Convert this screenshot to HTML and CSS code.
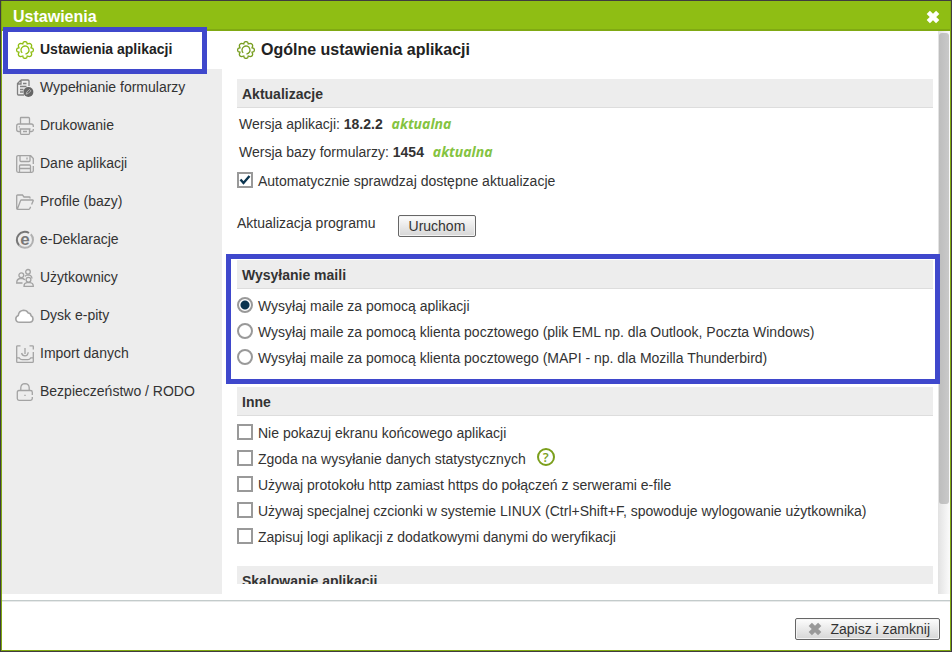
FILE: index.html
```html
<!DOCTYPE html>
<html lang="pl">
<head>
    <meta charset="UTF-8">
    <title>Ustawienia</title>
    <meta name="viewport" content="width=device-width, initial-scale=1.0">
    <link rel="stylesheet" href="styles.css">
</head>
<body>
    <svg class="defs" width="0" height="0">
        <symbol id="gear" viewBox="0 0 18 18">
            <path d="M7.3 1.2 Q9 0 10.7 1.2 L11.2 3 L13.2 2.3 Q15.5 2.5 15.7 4.8 L15 6.8 L16.8 7.3 Q18 9 16.8 10.7 L15 11.2 L15.7 13.2 Q15.5 15.5 13.2 15.7 L11.2 15 L10.7 16.8 Q9 18 7.3 16.8 L6.8 15 L4.8 15.7 Q2.5 15.5 2.3 13.2 L3 11.2 L1.2 10.7 Q0 9 1.2 7.3 L3 6.8 L2.3 4.8 Q2.5 2.5 4.8 2.3 L6.8 3 Z"/>
            <path d="M6.2 11.9 A4 4 0 1 1 9.5 13"/>
        </symbol>
        <symbol id="cross" viewBox="0 0 14 14">
            <path d="M2.3 2.3 L11.7 11.7 M11.7 2.3 L2.3 11.7" fill="none" stroke="currentColor" stroke-width="4.6"/>
        </symbol>
    </svg>

    <div class="window">
        <header class="titlebar">
            <h1>Ustawienia</h1>
            <button class="close" aria-label="Zamknij"><svg width="14" height="14"><use href="#cross"/></svg></button>
        </header>

        <div class="main">
            <nav class="menu">
                <a class="item active" href="#">
                    <svg class="icon" viewBox="0 0 18 18"><use href="#gear"/></svg>
                    Ustawienia aplikacji
                </a>
                <a class="item" href="#">
                    <svg class="icon" viewBox="0 0 18 18">
                        <path class="dark-line" d="M5 1 H12 Q13 1 13 2 V7 M5 1 L1.5 4.5 V15 Q1.5 16 2.5 16 H8 M1.5 5 H5 V1 M7 4.5 H10.5 M4 7.5 H10.5 M4 10.5 H7.5 M4 13 H7"/>
                        <circle class="dark-fill" cx="12.4" cy="13" r="5"/>
                        <path d="M10.2 15.2 L10.9 13 L13.4 10.5 L14.8 11.9 L12.3 14.4 Z" fill="none" stroke="#bbb" stroke-width=".9"/>
                    </svg>
                    Wypełnianie formularzy
                </a>
                <a class="item" href="#">
                    <svg class="icon" viewBox="0 0 18 18">
                        <path d="M4.5 7 V1 Q4.5 .5 5 .5 H12.5 Q13.5 .5 13.5 1.5 V7 M4 14.5 H2.5 Q.7 14.5 .7 12.7 V9 Q.7 7 2.7 7 H15.3 Q17.3 7 17.3 9 V10 M17.3 12 V13 Q17.3 14.5 15.5 14.5 H14 M2.8 9.8 H4 M4.5 12 V16.5 Q4.5 17.3 5.3 17.3 H12.7 Q13.5 17.3 13.5 16.5 V12 M3.5 12 H14.5 M7 14.5 H11"/>
                    </svg>
                    Drukowanie
                </a>
                <a class="item" href="#">
                    <svg class="icon" viewBox="0 0 18 18">
                        <path d="M17.3 9 V3.5 L14.7 .7 H2.2 Q.7 .7 .7 2.2 V15.8 Q.7 17.3 2.2 17.3 H15.8 Q17.3 17.3 17.3 15.8 V11 M4 1 V5.5 Q4 6.5 5 6.5 H13 Q14 6.5 14 5.5 V1 M11 2.5 V4.5 M3.5 17 V11 Q3.5 10 4.5 10 H13.5 Q14.5 10 14.5 11 V17 M4 13.5 H14"/>
                    </svg>
                    Dane aplikacji
                </a>
                <a class="item" href="#">
                    <svg class="icon" viewBox="0 0 18 18">
                        <path d="M14 5.5 V4.8 Q14 4 13.2 4 H8 L6.5 2 H1.5 Q.7 2 .7 2.8 V15.5 Q.7 16.3 1.5 16.3 H12.8 Q13.6 16.3 14 15.3 L14.6 13.8 M15.6 11.6 L17.2 7.8 Q17.4 7 16.6 7 H5.5 Q4.8 7 4.5 7.7 L1.4 16"/>
                    </svg>
                    Profile (bazy)
                </a>
                <a class="item" href="#">
                    <svg class="icon" viewBox="0 0 18 18">
                        <path class="ring-light" d="M14.8 3.2 A8 8 0 0 1 3 14.3"/>
                        <path class="ring" d="M13 2 A8 8 0 0 0 3 14.3"/>
                        <text class="letter" x="9" y="13.5">e</text>
                    </svg>
                    e-Deklaracje
                </a>
                <a class="item" href="#">
                    <svg class="icon" viewBox="0 0 18 18">
                        <circle cx="12" cy="2.8" r="2.3"/>
                        <circle cx="5.3" cy="6.3" r="2.4"/>
                        <circle cx="12.5" cy="10.8" r="2.4"/>
                        <path d="M9 7.3 Q10 5.8 12 5.8 Q15.8 6 16 9.5 M6.5 14 H.7 Q.7 10 4 9.5 H6.5 Q8 9.7 8.8 11 M8 17.3 Q8 14 11 13.7 H14 Q17.3 14 17.3 17.3 Z"/>
                    </svg>
                    Użytkownicy
                </a>
                <a class="item" href="#">
                    <svg class="icon" viewBox="0 0 18 18">
                        <path class="cloud" d="M3.7 15.3 Q.1 15.2 -.2 12 Q-.2 9.5 2.3 8.5 Q2.7 3.8 7.3 3.2 Q10.9 3.2 12.2 6 Q14.7 6 15.1 8.8 Q17.1 9.7 17 12 Q16.7 15.2 13.7 15.3 Z"/>
                    </svg>
                    Dysk e-pity
                </a>
                <a class="item" href="#">
                    <svg class="icon" viewBox="0 0 18 18">
                        <path d="M4.5 .8 H1.5 Q.7 .8 .7 1.6 V16.4 Q.7 17.3 1.5 17.3 H16.5 Q17.3 17.3 17.3 16.4 V7 M17.3 4.5 V1.6 Q17.3 .8 16.5 .8 H13.5 M.7 12.9 H3.2 Q4.4 14.7 6 14.7 H12 Q13.6 14.7 14.8 12.9 H17.3 M9 3 V9 M5.6 8 Q6.2 10.8 9 10.8 Q11.8 10.8 12.2 7.2"/>
                    </svg>
                    Import danych
                </a>
                <a class="item" href="#">
                    <svg class="icon" viewBox="0 0 18 18">
                        <path d="M4.8 7.5 V4.8 Q5 .8 9 .7 Q13 .8 13.2 4.8 V7.5 M16.3 12 V9.3 Q16.3 7.5 14.5 7.5 H3 Q1.3 7.5 1.3 9.3 V15.5 Q1.3 17.3 3 17.3 H14.5 Q16.3 17.3 16.3 15.5 V14 M9 11.7 V13"/>
                    </svg>
                    Bezpieczeństwo / RODO
                </a>
                <span class="mark menu-mark"></span>
            </nav>

            <main class="content">
                <div class="scrollbar"><div class="thumb"></div></div>
                <div class="panel">
                    <h2>
                        <svg class="icon" viewBox="0 0 18 18"><use href="#gear"/></svg>
                        Ogólne ustawienia aplikacji
                    </h2>

                    <section>
                        <h3>Aktualizacje</h3>
                        <p class="version">Wersja aplikacji: <strong>18.2.2</strong> <em>aktualna</em></p>
                        <p class="version">Wersja bazy formularzy: <strong>1454</strong> <em>aktualna</em></p>
                        <label class="option"><input type="checkbox" checked> Automatycznie sprawdzaj dostępne aktualizacje</label>
                        <div class="program">
                            <span>Aktualizacja programu</span>
                            <button class="btn">Uruchom</button>
                        </div>
                    </section>

                    <section>
                        <h3>Wysyłanie maili</h3>
                        <label class="option"><input type="radio" name="mail" checked> Wysyłaj maile za pomocą aplikacji</label>
                        <label class="option"><input type="radio" name="mail"> Wysyłaj maile za pomocą klienta pocztowego (plik EML np. dla Outlook, Poczta Windows)</label>
                        <label class="option"><input type="radio" name="mail"> Wysyłaj maile za pomocą klienta pocztowego (MAPI - np. dla Mozilla Thunderbird)</label>
                        <span class="mark section-mark"></span>
                    </section>

                    <section>
                        <h3>Inne</h3>
                        <label class="option"><input type="checkbox"> Nie pokazuj ekranu końcowego aplikacji</label>
                        <div class="with-help">
                            <label class="option"><input type="checkbox"> Zgoda na wysyłanie danych statystycznych</label>
                            <button class="help">?</button>
                        </div>
                        <label class="option"><input type="checkbox"> Używaj protokołu http zamiast https do połączeń z serwerami e-file</label>
                        <label class="option"><input type="checkbox"> Używaj specjalnej czcionki w systemie LINUX (Ctrl+Shift+F, spowoduje wylogowanie użytkownika)</label>
                        <label class="option"><input type="checkbox"> Zapisuj logi aplikacji z dodatkowymi danymi do weryfikacji</label>
                    </section>

                    <section>
                        <h3>Skalowanie aplikacji</h3>
                    </section>
                </div>
            </main>
        </div>

        <footer class="footer">
            <button class="btn save"><svg width="14" height="14"><use href="#cross"/></svg>Zapisz i zamknij</button>
        </footer>
    </div>
</body>
</html>
```
FILE: styles.css
```css
* {
    box-sizing: border-box;
}

body {
    margin: 0;
    padding: 1px;
    height: 100vh;
    background: #403c40;
    font-family: "Liberation Sans", Arial, sans-serif;
    font-size: 14px;
    color: #333;
}

h1, h2, h3, p {
    margin: 0;
}

.defs {
    position: absolute;
}

.window {
    display: flex;
    flex-direction: column;
    height: 100%;
    background: #fff;
    border: 1px solid #7fa810;
    border-top: none;
}

/* title bar */
.titlebar {
    display: flex;
    justify-content: space-between;
    align-items: center;
    height: 30px;
    padding: 3px 10px 0 11px;
    background: #8fbe14;
    border-bottom: 2px solid #80a913;
}

.titlebar h1 {
    font-size: 16px;
    color: #fff;
}

.close {
    display: flex;
    padding: 0;
    border: none;
    background: none;
    color: #fff;
    cursor: pointer;
}

/* left menu */
.main {
    display: flex;
    flex: 1;
    min-height: 0;
    padding-bottom: 6px;
}

.menu {
    position: relative;
    width: 220px;
    background: #ededed;
}

.item {
    display: flex;
    align-items: center;
    gap: 6px;
    height: 38px;
    padding: 0 0 2px 14px;
    color: #333;
    text-decoration: none;
}

.item.active {
    background: #fff;
    color: #222;
    font-weight: bold;
}

.icon {
    flex: none;
    width: 18px;
    height: 18px;
    fill: none;
    stroke: #a3a3a3;
    stroke-width: 1.3;
    overflow: visible;
}

.item .icon {
    margin-top: 2px;
}

.active .icon {
    stroke: #8fbe14;
}

.dark-line {
    stroke: #808080;
}

.dark-fill {
    fill: #666;
    stroke: none;
}

.ring {
    stroke: #777;
    stroke-width: 2;
}

.ring-light {
    stroke: #b0b0b0;
    stroke-width: 2;
}

.letter {
    font-size: 17px;
    font-weight: bold;
    text-anchor: middle;
    fill: #777;
    stroke: none;
}

.cloud {
    fill: #fff;
    stroke-width: 1.6;
}

/* highlighted areas */
.mark {
    position: absolute;
    border: 5px solid #3f48cc;
    pointer-events: none;
}

.menu-mark {
    top: -4px;
    left: 1px;
    right: 15px;
    height: 47px;
}

.section-mark {
    top: -6px;
    left: -11px;
    right: -7px;
    bottom: -14px;
}

/* content */
.content {
    position: relative;
    flex: 1;
    min-width: 0;
    padding-bottom: 10px;
}

.panel {
    height: 100%;
    padding: 0 17px 0 15px;
    overflow: hidden;
}

h2 {
    display: flex;
    align-items: center;
    gap: 6px;
    height: 38px;
    margin-bottom: 10px;
    font-size: 16px;
    color: #222;
}

h2 .icon {
    stroke: #789e20;
}

section {
    position: relative;
    margin-bottom: 17px;
}

h3 {
    height: 29px;
    margin-bottom: 3px;
    padding-left: 5px;
    background: #ededed;
    border-bottom: 1px solid #ddd;
    font-size: 14px;
    line-height: 31px;
}

.version {
    height: 28px;
    padding-left: 2px;
    line-height: 26px;
}

.version em {
    margin-left: 5px;
    font-family: "Open Sans", sans-serif;
    font-weight: bold;
    line-height: 1;
    color: #84c341;
}

.option {
    display: flex;
    align-items: center;
    gap: 5px;
    height: 26px;
    padding-top: 2px;
}

.option input {
    appearance: none;
    flex: none;
    width: 16px;
    height: 16px;
    margin: 0 0 2px;
    background: #fff;
    border: 2px solid #999;
}

.option input[type="radio"] {
    border-radius: 50%;
}

.option input[type="radio"]:checked {
    background: radial-gradient(circle, #0b3550 4px, #fff 5px);
}

.option input[type="checkbox"]:checked {
    background: #fff url("data:image/svg+xml,%3Csvg xmlns='http://www.w3.org/2000/svg' viewBox='0 0 12 12'%3E%3Cpath d='M1.5 5.5 L4.5 9 L10.5 2' fill='none' stroke='%230b3550' stroke-width='2.4'/%3E%3C/svg%3E");
}

.program {
    display: flex;
    align-items: flex-start;
    gap: 22px;
    padding: 22px 0 6px;
}

.btn {
    height: 22px;
    padding: 0 10px;
    border: 1px solid #666;
    border-radius: 2px;
    background: linear-gradient(#fdfdfd, #d6d6d6);
    box-shadow: inset 0 0 0 1px #f4f4f4;
    font-family: inherit;
    font-size: 14px;
    color: #333;
    cursor: pointer;
}

.with-help {
    display: flex;
    align-items: center;
    gap: 11px;
}

.help {
    width: 18px;
    height: 18px;
    margin-bottom: 2px;
    padding: 0;
    border: 2px solid #7b9f1c;
    border-radius: 50%;
    background: none;
    font-family: "Open Sans", sans-serif;
    font-size: 13px;
    font-weight: 600;
    line-height: 14px;
    color: #7b9f1c;
    cursor: pointer;
}

.scrollbar {
    position: absolute;
    top: 0;
    right: 0;
    bottom: 0;
    width: 12px;
    padding: 2px 1px 0;
    background: linear-gradient(to right, #e2e2e2, #fbfbfb);
}

.thumb {
    height: 84%;
    border-radius: 3px;
    background: linear-gradient(to right, #bdbdbd, #c9c9c9);
}

/* footer */
.footer {
    display: flex;
    justify-content: flex-end;
    align-items: center;
    height: 50px;
    padding: 7px 10px 0 0;
    border-top: 1px solid #c3cbcb;
    box-shadow: inset 0 1px #e8eaea;
}

.save {
    display: flex;
    align-items: center;
    gap: 8px;
    padding: 0 9px 0 12px;
}

.save svg {
    color: #999;
}
```
